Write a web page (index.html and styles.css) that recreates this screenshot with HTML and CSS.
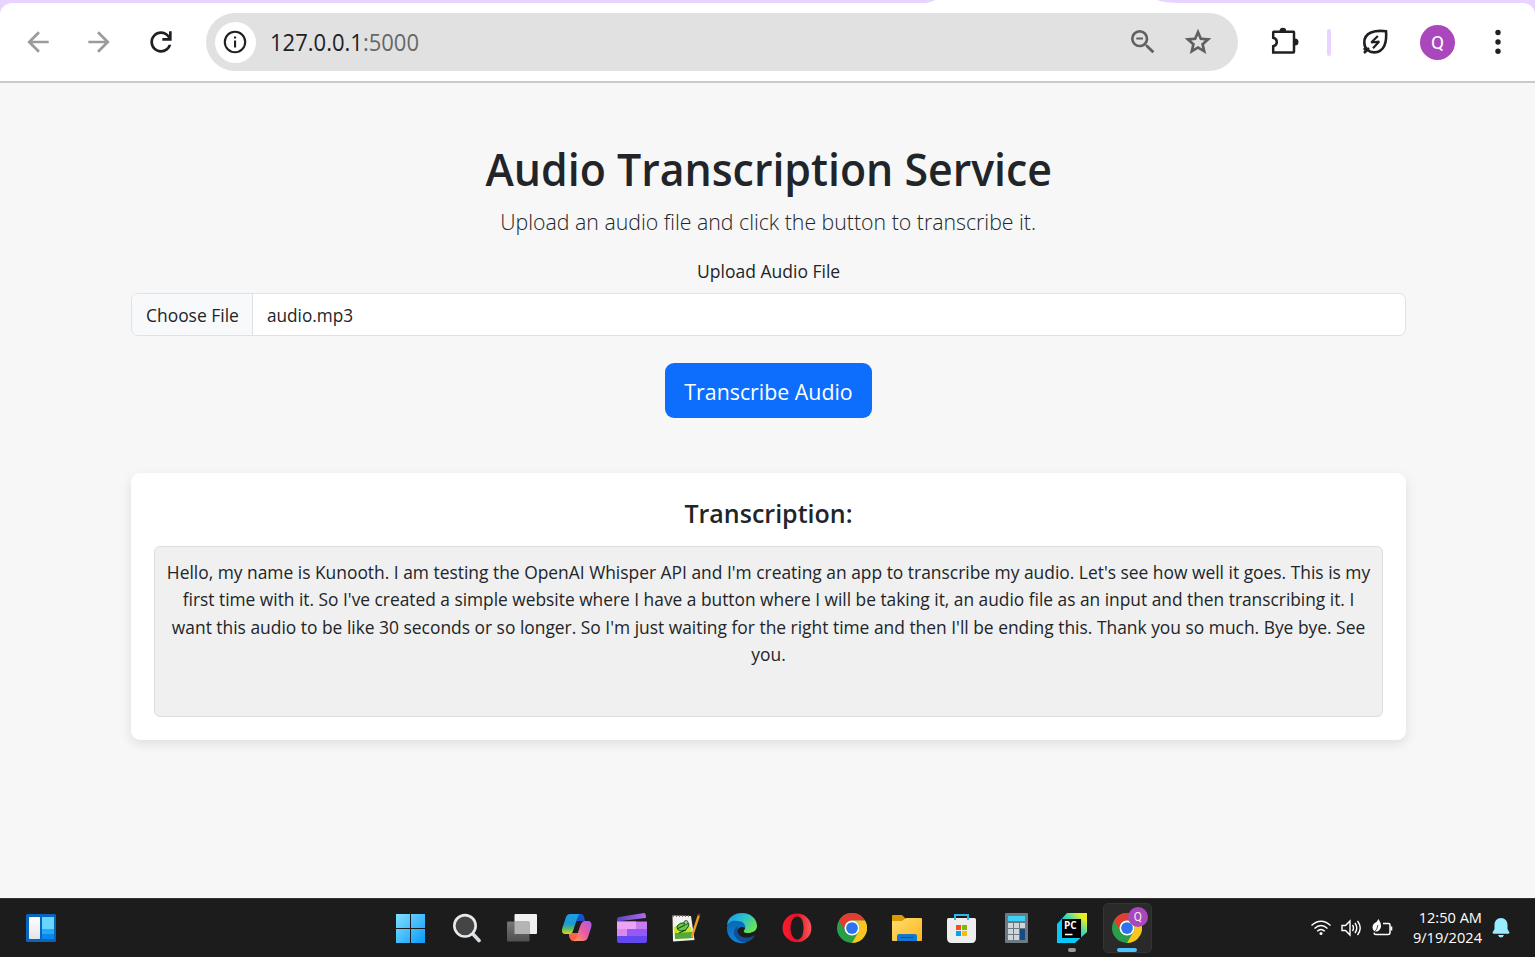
FILE: index.html
```html
<!DOCTYPE html>
<html lang="en">
<head>
<meta charset="utf-8">
<title>Audio Transcription Service</title>
<link rel="stylesheet" href="styles.css">
</head>
<body>
<div class="screen">
  <header class="browser">
    <svg class="active-tab" width="265" height="4" viewBox="0 0 265 4"><path d="M0 4Q13 3 18 0H240Q246 3 265 3V4Z" fill="#fff"/></svg>
    <div class="toolbar">
      <svg class="tool dim" viewBox="0 0 24 24"><path d="m7.825 13 5.6 5.6L12 20l-8-8 8-8 1.425 1.4-5.6 5.6H20v2Z"/></svg>
      <svg class="tool dim" viewBox="0 0 24 24"><path d="m16.175 13-5.6 5.6L12 20l8-8-8-8-1.425 1.4 5.6 5.6H4v2Z"/></svg>
      <svg class="tool reload" viewBox="0 0 24 24"><path d="M12 20q-3.35 0-5.675-2.325Q4 15.35 4 12q0-3.35 2.325-5.675Q8.65 4 12 4q1.725 0 3.3.712 1.575.713 2.7 2.038V4h2v7h-7V9h4.2q-.8-1.4-2.187-2.2Q13.625 6 12 6 9.5 6 7.75 7.75T6 12q0 2.5 1.75 4.25T12 18q1.925 0 3.475-1.1T17.65 14h2.1q-.7 2.65-2.85 4.325Q14.75 20 12 20Z"/></svg>
      <div class="omnibox">
        <span class="site-info"><svg width="24" height="24" viewBox="0 0 24 24"><circle cx="12" cy="12" r="10.2" fill="none" stroke="#1f2023" stroke-width="2.1"/><path d="M11 10.4h2.1v7H11zM11 6.4h2.1v2.2H11z" fill="#1f2023"/></svg></span>
        <span class="url">127.0.0.1<span class="port">:5000</span></span>
        <svg class="tool grey zoom" viewBox="0 0 24 24"><path d="M15.5 14h-.79l-.28-.27A6.471 6.471 0 0 0 16 9.5 6.5 6.5 0 1 0 9.5 16c1.61 0 3.09-.59 4.23-1.57l.27.28v.79l5 4.99L20.49 19l-4.99-5zm-6 0C7.01 14 5 11.99 5 9.5S7.01 5 9.5 5 14 7.01 14 9.5 11.99 14 9.5 14zM7 8.7h5v1.5H7z"/></svg>
        <svg class="tool grey star" viewBox="0 0 24 24"><path d="m8.85 16.825 3.15-1.9 3.15 1.9-.825-3.6 2.775-2.4-3.65-.325-1.45-3.4-1.45 3.4-3.65.325 2.775 2.4ZM5.825 21l1.625-7.025L2 9.25l7.2-.625L12 2l2.8 6.625 7.2.625-5.45 4.725L18.175 21 12 17.275Z"/></svg>
      </div>
      <svg class="tool puzzle" viewBox="0 0 32 32"><path d="M5.8 5.8H25.6Q26 5.8 26 6.4V25.8Q26 26.4 25.4 26.4H5.2V20.3C10 19 10 13 5.2 11.8V6.4Q5.2 5.8 5.8 5.8Z" fill="none" stroke="#1f2023" stroke-width="2.5"/><path d="M11.600 5a3.300 3.300 0 0 1 6.600 0ZM27 12.600a3.500 3.500 0 0 1 0 7Z" fill="#1f2023"/></svg>
      <span class="divider"></span>
      <svg class="tool leaf" viewBox="0 0 32 32"><path d="M27 5.200C16 4 5.300 6 5.300 16.400C5.300 23 10 26.500 15.200 26.400C25.500 26 28 16 27 5.200Z" fill="none" stroke="#1f2023" stroke-width="2.600"/><path d="M5 27l5-5M5 22l3 4" stroke="#1f2023" stroke-width="2.500"/><path d="M18.800 10 12.300 16.500 20.200 15.600 14 22.200" fill="none" stroke="#1f2023" stroke-width="2.200" stroke-linejoin="bevel"/></svg>
      <span class="avatar">Q</span>
      <svg class="tool dots" viewBox="0 0 32 32"><circle cx="16" cy="6.500" r="2.700"/><circle cx="16" cy="16" r="2.700"/><circle cx="16" cy="25.300" r="2.700"/></svg>
    </div>
  </header>

  <main class="page">
    <h1 class="title">Audio Transcription Service</h1>
    <p class="lead">Upload an audio file and click the button to transcribe it.</p>
    <div class="label">Upload Audio File</div>
    <div class="file-input"><span class="choose"><span class="choose-text">Choose File</span></span><span class="filename">audio.mp3</span></div>
    <button class="submit"><span class="submit-text">Transcribe Audio</span></button>
    <section class="card">
      <h2 class="card-title">Transcription:</h2>
      <div class="transcript">
        <div class="line l1">Hello, my name is Kunooth. I am testing the OpenAI Whisper API and I'm creating an app to transcribe my audio. Let's see how well it goes. This is my</div>
        <div class="line l2">first time with it. So I've created a simple website where I have a button where I will be taking it, an audio file as an input and then transcribing it. I</div>
        <div class="line l3">want this audio to be like 30 seconds or so longer. So I'm just waiting for the right time and then I'll be ending this. Thank you so much. Bye bye. See</div>
        <div class="line l4">you.</div>
      </div>
    </section>
  </main>

  <footer class="taskbar">
    <svg class="widgets" width="30" height="28" viewBox="0 0 30 28"><defs><linearGradient id="wg" x2="0" y2="1"><stop stop-color="#fff"/><stop offset="1" stop-color="#e4e4e8"/></linearGradient></defs><rect width="30" height="28" rx="1.5" fill="#0865bd"/><rect x="3" y="3" width="11" height="22" rx=".7" fill="url(#wg)"/><path d="M16 3h12v12H16z" fill="#65d7ff"/><path d="M16 15h12v5H16z" fill="#20a8fb"/><path d="M16 20h12v5H16z" fill="#0889ee"/></svg>
    <div class="apps">
      <div class="app"><svg width="30" height="30" viewBox="0 0 30 30"><defs><linearGradient id="win" gradientUnits="userSpaceOnUse" x1="0" y1="0" x2="30" y2="30"><stop stop-color="#82e1ff"/><stop offset="1" stop-color="#079af9"/></linearGradient></defs><path d="M0 1h14v14H0zM15 1h14v14H15zM0 16h14v14H0zM15 16h14v14H15z" fill="url(#win)"/></svg></div>
      <div class="app"><svg width="30" height="30" viewBox="0 0 30 30"><path d="m21 20 7 7.500" stroke="#d6dce0" stroke-width="3.600" stroke-linecap="round"/><circle cx="14" cy="12.800" r="10.700" fill="#454545" stroke="#e7eaec" stroke-width="2.600"/></svg></div>
      <div class="app"><svg class="nudge" width="30" height="30" viewBox="0 0 30 30"><defs><linearGradient id="tv" x2="0" y2="1"><stop stop-color="#777"/><stop offset="1" stop-color="#505050"/></linearGradient></defs><rect x="7.500" y="1" width="22.500" height="20" rx="1" fill="#f1f1f1"/><rect x="0" y="8.500" width="22.500" height="20" rx="1" fill="url(#tv)"/><path d="M7.500 8.500H22.500V21H7.500z" fill="#b4b4b4"/></svg></div>
      <div class="app"><svg class="nudge" width="30" height="30" viewBox="0 0 30 30"><defs><linearGradient id="c1" x2="0" y2="1"><stop stop-color="#189fe3"/><stop offset=".5" stop-color="#1d9bd0"/><stop offset=".75" stop-color="#5dbb67"/><stop offset="1" stop-color="#f3d20d"/></linearGradient><linearGradient id="c2" x1="1" x2="0" y2="1"><stop stop-color="#a35cf0"/><stop offset=".5" stop-color="#ed5b9f"/><stop offset="1" stop-color="#ff9958"/></linearGradient></defs><path d="M7 20h10l-3 8c-5 1-6-2-7-5z" fill="#fb6348"/><path d="M13 1h6c3 0 3 3 4 7h-7c-2 0-3 2-3 4z" fill="#174fcd"/><path d="M8 1h10c-3 2-5 12-7 17-1 3-3 3-5 3H3c-3 0-4-3-2-8L4 4c1-2 2-3 4-3Z" fill="url(#c1)"/><path d="M23 8h3c4 0 4 4 3 7l-3 9c-1 3-3 4-5 4h-9c3-2 5-13 7-17 1-2 2-3 4-3Z" fill="url(#c2)"/></svg></div>
      <div class="app"><svg class="nudge" width="30" height="30" viewBox="0 0 30 30"><defs><linearGradient id="clip" x2="1"><stop stop-color="#5746c7"/><stop offset="1" stop-color="#b269ed"/></linearGradient></defs><path d="M0 6Q0 4.500 2 4L27 0Q29 0 29 5L3 8H0Z" fill="url(#clip)"/><path d="M0 8.500H30V16H0Z" fill="#c77bf1"/><path d="M0 8.500H19V16H0Z" fill="#eaa3f5"/><path d="M0 16H30V23H0Z" fill="#9558f5"/><path d="M0 16H10V23H0Z" fill="#d888ef"/><path d="M0 23H30V28Q30 30 28 30H2Q0 30 0 28Z" fill="#6348ee"/></svg></div>
      <div class="app"><svg width="30" height="30" viewBox="0 0 30 30"><path d="M1.500 2.500 20 3l3.500 24L2 28.500Z" fill="#f2f3ef"/><path d="M3 14q9-5 17 0l2 11-18 1Z" fill="#c5e429"/><path d="M4 20l17-1 1 6-18 1Z" fill="#53a640"/><path d="M2 3h18" stroke="#777" stroke-width="2" stroke-dasharray="1 2"/><path d="M6 13q3-4 8-3 6-1 3 4-2 4-6 4-5 0-5-5Z" fill="#63c747" stroke="#184d18" stroke-width="1"/><circle cx="15" cy="9.500" r="2" fill="#9bd78c" stroke="#222" stroke-width=".7"/><path d="m6 16 8-4m-6 8 7-3" stroke="#173d17" stroke-width="1"/><path d="m28 2-6 18-1 4" fill="none" stroke="#ec9e22" stroke-width="2.400"/><path d="m27.500 3 1-2" stroke="#863a30" stroke-width="2.500"/></svg></div>
      <div class="app"><svg class="nudge" width="30" height="30" viewBox="0 0 30 30"><defs><linearGradient id="ed" x2="1" y2=".6"><stop stop-color="#1597e5"/><stop offset=".5" stop-color="#29bdd4"/><stop offset="1" stop-color="#69e456"/></linearGradient><linearGradient id="ed2" x2="0" y2="1"><stop stop-color="#0b67b5"/><stop offset="1" stop-color="#0d83db"/></linearGradient></defs><path d="M0 12C1 3 9 0 15 0c9 0 15 6 15 13 0 5-5 7-9 7-5 0-5-2-3-4C20 10 8 6 0 12Z" fill="url(#ed)"/><path d="M0 14C1 8 6 7 11 8c5 0 8 4 7 7-5-4-12 4-6 10 2 3 5 4 8 4C9 33-1 25 0 14Z" fill="url(#ed2)"/><path d="M11 13c-3 10 7 15 17 9-4 8-12 9-17 5-6-5-5-11 0-14Z" fill="#104f91"/></svg></div>
      <div class="app"><svg width="30" height="30" viewBox="0 0 30 30"><defs><linearGradient id="op" x2="1"><stop stop-color="#ff1b2d"/><stop offset=".5" stop-color="#df1327"/><stop offset="1" stop-color="#ff5858"/></linearGradient></defs><path fill-rule="evenodd" d="M15 .5a14.200 14.200 0 1 0 0 28.800A14.200 14.200 0 0 0 15 .5ZM15.500 3.500c4 0 6 5 6 11.500s-2 11.500-6 11.500-7-5-7-11.500 3-11.500 7-11.500Z" fill="url(#op)"/></svg></div>
      <div class="app"><svg width="30" height="30" viewBox="0 0 48 48"><g id="chrome"><circle cx="24" cy="24" r="24" fill="#289e49"/><path d="M3.200 12A24 24 0 0 1 44.800 12H24A12 12 0 0 0 13.600 30Z" fill="#e33d32"/><path d="M44.800 12A24 24 0 0 1 24 48L34.400 30A12 12 0 0 0 24 12Z" fill="#fcc51d"/><circle cx="24" cy="24" r="12" fill="#fff"/><circle cx="24" cy="24" r="9.400" fill="#2d73ee"/></g></svg></div>
      <div class="app"><svg width="30" height="30" viewBox="0 0 30 30"><defs><linearGradient id="fd" x2="1" y2="1"><stop stop-color="#ffdd72"/><stop offset="1" stop-color="#fbb61b"/></linearGradient></defs><path d="M0 9V3Q0 2 1 2H10L13 5V9Z" fill="#da9a02"/><path d="M0 8H10L14 5H29Q30 5 30 6V27Q30 28 29 28H1Q0 28 0 27Z" fill="url(#fd)"/><path d="M5 28V23Q5 21 7 21H23Q25 21 25 23V28Z" fill="#1178cd"/><path d="M8.500 24.500H21.500" stroke="#084c8e"/></svg></div>
      <div class="app"><svg width="30" height="30" viewBox="0 0 30 30"><path d="M0 6.500Q0 5 1.500 5H27.500Q29 5 29 6.500V25Q29 30 24.500 30H4.500Q0 30 0 25Z" fill="#eee"/><path d="M8 7V2h13v5" fill="none" stroke="#32b5eb" stroke-width="2"/><path d="M9 12H14V17H9Z" fill="#f25022"/><path d="M15 12H20V17H15Z" fill="#7fba00"/><path d="M9 18H14V23H9Z" fill="#00a4ef"/><path d="M15 18H20V23H15Z" fill="#ffb900"/></svg></div>
      <div class="app"><svg width="30" height="30" viewBox="0 0 30 30"><rect x="3" y="0" width="23" height="30" rx="1" fill="#6e7a82"/><path d="M6 3H23V8H6Z" fill="#3bd1f8"/><path d="M6 10h5v5H6zm6 0h5v5h-5zm6 0h5v5h-5zM6 16h5v5H6zm6 0h5v5h-5zM6 22h5v5H6zm6 0h5v5h-5z" fill="#ced5db"/><path d="M18 16H23V27H18Z" fill="#174b86"/></svg></div>
      <div class="app running"><svg width="30" height="30" viewBox="0 0 30 30"><defs><linearGradient id="py" x1="0" y1="1" x2="1" y2="0"><stop offset=".45" stop-color="#08c9f5"/><stop offset=".65" stop-color="#55dca0"/><stop offset=".85" stop-color="#e7ed25"/></linearGradient></defs><path d="M10 0H30V19L18 30H0V11Z" fill="url(#py)"/><path d="M5 6H24V25H5Z" fill="#000"/><path d="M8 21.500H15.500" stroke="#fff" stroke-width="1.500"/><text x="7" y="15.500" class="py-text">PC</text></svg></div>
      <div class="app current"><svg width="30" height="30" viewBox="0 0 48 48"><use href="#chrome"/></svg><span class="badge">Q</span></div>
    </div>
    <div class="tray">
      <svg width="20" height="16" viewBox="0 0 20 16" fill="none" stroke="#fff" stroke-width="1.400"><path d="M.5 5.500Q10-3 19.500 5.500M3.500 8.500Q10 2.500 16.500 8.500M6.200 11.300Q10 7.500 13.800 11.300"/><circle cx="10" cy="13.500" r="1.500" fill="#fff" stroke="none"/></svg>
      <svg width="21" height="18" viewBox="0 0 21 18" fill="none" stroke="#fff" stroke-width="1.400"><path d="M1 6.500H4.500L9 2V16L4.500 11.500H1ZM11.500 6Q13.500 9 11.500 12M14 4Q17.500 9 14 14M16.500 2Q22 9 16.500 16"/></svg>
      <svg width="21" height="18" viewBox="0 0 21 18"><path d="M11 4.500H16.500Q18 4.500 18 6V13.500Q18 15.500 16 15.500H4Q2 15.500 2 13.500" fill="none" stroke="#fff" stroke-width="1.500"/><path d="M18.500 7.500h1.800v4h-1.800zM6.500 0Q11 7 7.500 11Q5 13.500 2 12Q-1 8 2 4.500Q5 3.500 6.500 0Z" fill="#fff"/><path d="M6 6Q6 10 1 14.500" stroke="#1c1c1c" stroke-width=".8" fill="none"/></svg>
      <div class="clock"><span class="time">12:50 AM</span><span class="date">9/19/2024</span></div>
      <svg class="bell" width="18" height="20" viewBox="0 0 18 20"><path d="M9 0C5 0 2.500 3 2.500 7V11L.5 14.500Q.5 15.800 2 15.800H16Q17.500 15.800 17.500 14.500L15.500 11V7C15.500 3 13 0 9 0ZM6 17H12Q11 19.500 9 19.500T6 17Z" fill="#99ebff"/></svg>
    </div>
  </footer>
</div>
</body>
</html>
```
FILE: styles.css
```css
* { box-sizing: border-box; }
body { margin: 0; font-family: "Open Sans", "Noto Sans", sans-serif; color: #212529; }
.screen { display: flex; flex-direction: column; width: 1535px; height: 957px; overflow: hidden; background: #f7f7f7; }

.browser { position: relative; height: 83px; padding-top: 3px; background: #e9d3ff; }
.active-tab { position: absolute; left: 917px; top: 0; }
.toolbar { display: flex; align-items: center; height: 80px; padding: 0 21px 0 22px; background: #fff; border-bottom: 2px solid #cacaca; border-radius: 12px 12px 0 0; }
.tool { width: 32px; height: 32px; flex: none; fill: #1f2023; }
.tool + .tool { margin-left: 29px; }
.tool.reload { margin-left: 30px; }
.dim { fill: #9b9b9d; }
.tool.grey { fill: #5f6062; }
.omnibox { display: flex; align-items: center; width: 1032px; height: 58px; margin-left: 29px; padding: 0 24px 0 9px; border-radius: 29px; background: #e1e1e1; }
.site-info { display: flex; align-items: center; justify-content: center; width: 41px; height: 41px; padding-right: 1px; border-radius: 50%; background: #fff; }
.url { flex: 1; margin-left: 14px; font-size: 23.500px; line-height: 30px; white-space: nowrap; color: #1f2023; transform: scaleX(.937); transform-origin: left; }
.port { color: #66676a; }
.omnibox .star { margin-left: 23px; }
.puzzle { margin-left: 30px; }
.divider { width: 4px; height: 27px; margin-left: 27px; border-radius: 2px; background: #e9d3ff; }
.leaf { margin-left: 28px; }
.avatar { display: flex; align-items: center; justify-content: center; width: 35px; height: 35px; margin-left: 29px; border-radius: 50%; background: #ab47bc; color: #fff; font: 19px Roboto, sans-serif; }
.dots { margin-left: 27px; }

.page { flex: 1; display: flex; flex-direction: column; align-items: center; width: 1275px; margin-left: 131px; padding-top: 53px; text-align: center; white-space: nowrap; }
.title { margin: 0; font-size: 45.500px; line-height: 64px; font-weight: 600; transform: scaleX(.942); }
.lead { margin: 5px 0 0; font-size: 22.500px; line-height: 34px; font-weight: 300; transform: scaleX(.946); }
.label { margin-top: 19px; font-size: 18px; line-height: 27px; transform: scaleX(.973); }
.file-input { display: flex; width: 100%; height: 43px; margin-top: 8px; border: 1px solid #dee2e6; border-radius: 7px; background: #fff; overflow: hidden; font-size: 18px; line-height: 43px; text-align: left; }
.choose { width: 121px; padding-left: 14px; background: #f8f9fa; border-right: 1px solid #dee2e6; }
.choose-text { display: block; transform: scaleX(.968); transform-origin: left; }
.filename { margin-left: 14px; transform: scaleX(.955); transform-origin: left; }
.submit { width: 207px; height: 55px; margin-top: 27px; padding: 0; border: 0; border-radius: 9px; background: #0d6efd; color: #fff; font: 22px "Open Sans", sans-serif; }
.submit-text { display: block; transform: scaleX(.97); }
.card { width: 100%; height: 267px; margin-top: 55px; padding: 23px; border-radius: 9px; background: #fff; box-shadow: 0 4px 12px rgba(0,0,0,.1); }
.card-title { margin: 0 0 15px; font-size: 26px; line-height: 35px; font-weight: 600; transform: scaleX(.962); }
.transcript { height: 171px; padding: 12px 0; border: 1px solid #ddd; border-radius: 6px; background: #f0f0f0; font-size: 18px; line-height: 27.400px; }
.line { display: flex; justify-content: center; transform: scaleX(.9665); }
.line.l2 { transform: scaleX(.963); }

.taskbar { display: flex; align-items: center; height: 59px; padding: 0 25px 0 26px; background: #1c1c1c; border-top: 1px solid #333; }
.apps { display: grid; grid-template-columns: repeat(14, 55.150px); margin-left: 327px; }
.app { position: relative; display: flex; align-items: center; justify-content: center; height: 50px; }
.app svg { display: block; }
.app .nudge { margin-left: 2px; }
.running::after { content: ""; position: absolute; left: 23px; bottom: 1px; width: 8px; height: 4px; border-radius: 2px; background: #999; }
.current::before { content: ""; position: absolute; inset: 0 3px; border: 1px solid #343434; border-radius: 5px; background: #2a2a2a; }
.current::after { content: ""; position: absolute; left: 17px; bottom: 1px; width: 20px; height: 4px; border-radius: 2px; background: #4cc2ff; }
.current svg { position: relative; }
.badge { position: absolute; left: 28px; top: 4px; width: 20px; height: 20px; border-radius: 50%; background: #ab47bc; color: #eee; font: 12px/20px Roboto, sans-serif; text-align: center; }
.py-text { font: 700 10px "Open Sans", sans-serif; fill: #fff; }
.tray { display: flex; align-items: center; gap: 10px; margin-left: auto; }
.clock { display: flex; flex-direction: column; align-items: flex-end; width: 79px; padding-bottom: 2px; font-size: 14.600px; line-height: 20px; color: #fff; white-space: nowrap; }
```
